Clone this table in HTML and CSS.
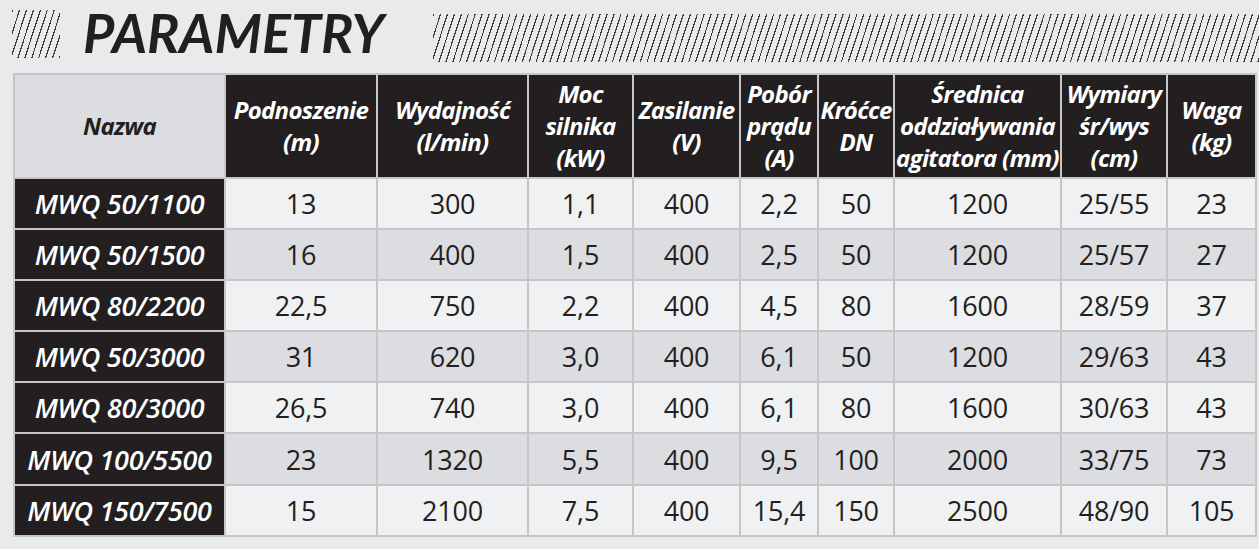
FILE: index.html
```html
<!DOCTYPE html>
<html lang="pl">
<head>
<meta charset="utf-8">
<title>Parametry</title>
<link rel="stylesheet" href="styles.css">
</head>
<body>
<header class="title-bar">
  <div class="hatch hatch-left"></div>
  <h1 class="title">PARAMETRY</h1>
  <div class="hatch hatch-right"></div>
</header>
<table class="params">
  <colgroup>
    <col class="c1"><col class="c2"><col class="c3"><col class="c4"><col class="c5">
    <col class="c6"><col class="c7"><col class="c8"><col class="c9"><col class="c10">
  </colgroup>
  <thead>
    <tr>
      <th class="corner">Nazwa</th>
      <th>Podnoszenie<br>(m)</th>
      <th>Wydajność<br>(l/min)</th>
      <th>Moc<br>silnika<br>(kW)</th>
      <th>Zasilanie<br>(V)</th>
      <th>Pobór<br>prądu<br>(A)</th>
      <th>Króćce<br>DN</th>
      <th>Średnica<br>oddziaływania<br>agitatora (mm)</th>
      <th>Wymiary<br>śr/wys<br>(cm)</th>
      <th>Waga<br>(kg)</th>
    </tr>
  </thead>
  <tbody>
    <tr class="light"><th>MWQ 50/1100</th><td>13</td><td>300</td><td>1,1</td><td>400</td><td>2,2</td><td>50</td><td>1200</td><td>25/55</td><td>23</td></tr>
    <tr class="dark"><th>MWQ 50/1500</th><td>16</td><td>400</td><td>1,5</td><td>400</td><td>2,5</td><td>50</td><td>1200</td><td>25/57</td><td>27</td></tr>
    <tr class="light"><th>MWQ 80/2200</th><td>22,5</td><td>750</td><td>2,2</td><td>400</td><td>4,5</td><td>80</td><td>1600</td><td>28/59</td><td>37</td></tr>
    <tr class="dark"><th>MWQ 50/3000</th><td>31</td><td>620</td><td>3,0</td><td>400</td><td>6,1</td><td>50</td><td>1200</td><td>29/63</td><td>43</td></tr>
    <tr class="light"><th>MWQ 80/3000</th><td>26,5</td><td>740</td><td>3,0</td><td>400</td><td>6,1</td><td>80</td><td>1600</td><td>30/63</td><td>43</td></tr>
    <tr class="dark"><th>MWQ 100/5500</th><td>23</td><td>1320</td><td>5,5</td><td>400</td><td>9,5</td><td>100</td><td>2000</td><td>33/75</td><td>73</td></tr>
    <tr class="light"><th>MWQ 150/7500</th><td>15</td><td>2100</td><td>7,5</td><td>400</td><td>15,4</td><td>150</td><td>2500</td><td>48/90</td><td>105</td></tr>
  </tbody>
</table>
</body>
</html>
```
FILE: styles.css
```css
html, body {
  margin: 0;
  padding: 0;
  background: #e9eaec;
}
body {
  font-family: "Open Sans", "Noto Sans", sans-serif;
  color: #231f20;
  width: 1259px;
  height: 549px;
  overflow: hidden;
}
.title-bar {
  display: flex;
  align-items: flex-start;
  height: 73px;
}
.hatch {
  background: repeating-linear-gradient(108deg, #3b3b3b 0 1.2px, transparent 1.2px 6.6px);
}
.hatch-left {
  width: 48px;
  height: 48px;
  margin: 10px 0 0 12px;
}
.hatch-right {
  flex: 1;
  height: 48px;
  margin-top: 14px;
}
.title {
  margin: 3px 49px 0 23px;
  font-family: "Lato", "Open Sans", sans-serif;
  font-size: 54px;
  line-height: 60px;
  font-weight: 700;
  font-style: italic;
  letter-spacing: 0px;
  color: #231f20;
}
.params {
  margin-left: 13px;
  width: 1243px;
  table-layout: fixed;
  border-collapse: collapse;
  border: 2px solid #c5c6c8;
}
.c1 { width: 211px; }
.c2 { width: 152px; }
.c3 { width: 151px; }
.c4 { width: 105px; }
.c5 { width: 107px; }
.c6 { width: 78px; }
.c7 { width: 76px; }
.c8 { width: 167px; }
.c9 { width: 106px; }
.c10 { width: 89px; }
.params th, .params td {
  border: 2px solid #c5c6c8;
  padding: 0;
  text-align: center;
  vertical-align: middle;
  white-space: nowrap;
  overflow: visible;
}
.params thead th {
  height: 102px;
  background: #231f20;
  color: #ffffff;
  font-size: 24px;
  font-weight: 700;
  font-style: italic;
  line-height: 32px;
  letter-spacing: -0.7px;
}
.params thead th.corner {
  background: #dcdde0;
  color: #231f20;
}
.params tbody th {
  background: #231f20;
  color: #ffffff;
  font-size: 27px;
  font-weight: 600;
  font-style: italic;
  letter-spacing: -0.3px;
}
.params tbody td {
  height: 49.1px;
  font-size: 27px;
  font-weight: 400;
  color: #231f20;
  letter-spacing: -0.2px;
}
.params tr.light td { background: #f0f1f3; }
.params tr.dark td { background: #dcdde0; }
```
